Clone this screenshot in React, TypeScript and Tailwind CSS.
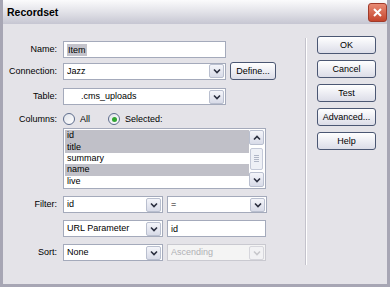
import React from "react";

const font = { fontFamily: '"Liberation Sans", Arial, sans-serif' };

const Arrow: React.FC<{ disabled?: boolean }> = ({ disabled }) => (
    <div
        className={`flex h-[14px] w-[15px] shrink-0 items-center justify-center rounded-[2px] border ${
            disabled ? "border-[#d6d6dc] bg-[#f2f2f4]" : "border-[#b9bfcf] bg-gradient-to-b from-[#f4f5fa] to-[#d8dbe8]"
        }`}
    >
        <svg width="8" height="6" viewBox="0 0 8 6">
            <path
                d="M1 1.5 L4 4.5 L7 1.5"
                fill="none"
                stroke={disabled ? "#c8c8cc" : "#2b2f3f"}
                strokeWidth="1.6"
            />
        </svg>
    </div>
);

const Select: React.FC<{ value: string; width: string; disabled?: boolean; indent?: boolean }> = ({
    value,
    width,
    disabled,
    indent,
}) => (
    <div
        className={`flex h-[17px] items-center border pl-[3px] pr-[1px] ${width} ${
            disabled ? "border-[#c9c9d0] bg-[#f4f4f4] text-[#b0b0b4]" : "border-[#a4aabb] bg-white text-black"
        }`}
    >
        <span className={`flex-1 truncate leading-[13px] ${indent ? "pl-[14px]" : ""}`}>{value}</span>
        <Arrow disabled={disabled} />
    </div>
);

const Input: React.FC<{ value: string; width: string; highlight?: boolean }> = ({ value, width, highlight }) => (
    <div className={`flex h-[17px] items-center border border-[#a4aabb] bg-white pl-[3px] ${width}`}>
        <span className={`leading-[12px] ${highlight ? "bg-[#c3c3cb] px-[1px]" : ""}`}>{value}</span>
    </div>
);

const Button: React.FC<{ label: string; className?: string }> = ({ label, className }) => (
    <div
        className={`flex h-[18px] items-center justify-center rounded-[3px] border border-[#4b5773] bg-gradient-to-b from-white to-[#dcdde8] text-black ${
            className ?? "w-[59px]"
        }`}
    >
        {label}
    </div>
);

const Row: React.FC<{ label: string; className?: string; children: React.ReactNode }> = ({
    label,
    className,
    children,
}) => (
    <div className={`flex items-center ${className ?? ""}`}>
        <div className="w-[60px] shrink-0 pr-[6px] text-right">{label}</div>
        <div className="flex items-center gap-[4px]">{children}</div>
    </div>
);

const Radio: React.FC<{ checked?: boolean }> = ({ checked }) => (
    <div className="flex h-[12px] w-[12px] items-center justify-center rounded-full border border-[#5d6c8c] bg-gradient-to-br from-[#e0e3ea] to-white">
        {checked && <div className="h-[5px] w-[5px] rounded-full bg-[#31a531]" />}
    </div>
);

const columns = [
    { name: "id", sel: true },
    { name: "title", sel: true },
    { name: "summary", sel: false },
    { name: "name", sel: true },
    { name: "live", sel: false },
];

export default function App() {
    return (
        <div
            style={font}
            className="flex h-[287px] w-[390px] flex-col overflow-hidden border-[3px] border-t-0 border-[#a7a6b4] bg-[#e4e3e8] text-[9px] leading-none text-black"
        >
            {/* title bar */}
            <div className="-mx-[3px] flex h-[24px] shrink-0 items-center justify-between bg-gradient-to-b from-[#fbfbfc] via-[#e2e2e8] to-[#c6c6d2] pl-[7px] pr-[3px]">
                <span className="text-[10.5px] font-bold">Recordset</span>
                <div className="flex h-[19px] w-[19px] items-center justify-center rounded-[3px] border border-[#a03a2a] bg-gradient-to-b from-[#e88a74] to-[#c4442c]">
                    <svg width="11" height="11" viewBox="0 0 11 11">
                        <path d="M2 2 L9 9 M9 2 L2 9" stroke="white" strokeWidth="2" />
                    </svg>
                </div>
            </div>

            <div className="flex flex-1">
                {/* form area */}
                <div className="flex w-[302px] flex-col pt-[17px]">
                    <Row label="Name:">
                        <Input value="Item" width="w-[163px]" highlight />
                    </Row>
                    <Row label="Connection:" className="mt-[4px]">
                        <Select value="Jazz" width="w-[163px]" />
                        <Button label="Define..." className="w-[46px]" />
                    </Row>
                    <Row label="Table:" className="mt-[8px]">
                        <Select value=".cms_uploads" width="w-[163px]" indent />
                    </Row>
                    <Row label="Columns:" className="mt-[7px] h-[14px]">
                        <Radio />
                        <span className="ml-[1px] mr-[14px]">All</span>
                        <Radio checked />
                        <span className="ml-[1px]">Selected:</span>
                    </Row>
                    <div className="ml-[60px] mt-[2px] flex h-[61px] w-[203px] border border-[#a4aabb] bg-white p-[1px]">
                        <div className="flex flex-1 flex-col">
                            {columns.map((c) => (
                                <div
                                    key={c.name}
                                    className={`flex h-[11.6px] items-center pl-[2px] ${c.sel ? "bg-[#c0c0c8]" : ""}`}
                                >
                                    {c.name}
                                </div>
                            ))}
                        </div>
                        <div className="flex w-[15px] flex-col items-center justify-between">
                            <div className="flex h-[15px] w-[15px] items-center justify-center rounded-[2px] border border-[#b9bfcf] bg-gradient-to-b from-[#f4f5fa] to-[#d8dbe8]">
                                <svg width="8" height="6" viewBox="0 0 8 6">
                                    <path d="M1 4.5 L4 1.5 L7 4.5" fill="none" stroke="#2b2f3f" strokeWidth="1.6" />
                                </svg>
                            </div>
                            <div className="flex h-[22px] w-[13px] flex-col items-center justify-center gap-[1px] rounded-[2px] border border-[#c4c9d8] bg-[#eef0f6]">
                                <div className="h-px w-[5px] bg-[#b0b6c6]" />
                                <div className="h-px w-[5px] bg-[#b0b6c6]" />
                                <div className="h-px w-[5px] bg-[#b0b6c6]" />
                                <div className="h-px w-[5px] bg-[#b0b6c6]" />
                            </div>
                            <div className="flex h-[15px] w-[15px] items-center justify-center rounded-[2px] border border-[#b9bfcf] bg-gradient-to-b from-[#f4f5fa] to-[#d8dbe8]">
                                <svg width="8" height="6" viewBox="0 0 8 6">
                                    <path d="M1 1.5 L4 4.5 L7 1.5" fill="none" stroke="#2b2f3f" strokeWidth="1.6" />
                                </svg>
                            </div>
                        </div>
                    </div>
                    <Row label="Filter:" className="mt-[7px]">
                        <Select value="id" width="w-[100px]" />
                        <Select value="=" width="w-[100px]" />
                    </Row>
                    <div className="ml-[60px] mt-[7px] flex gap-[4px]">
                        <Select value="URL Parameter" width="w-[100px]" />
                        <Input value="id" width="w-[99px]" />
                    </div>
                    <Row label="Sort:" className="mt-[7px]">
                        <Select value="None" width="w-[100px]" />
                        <Select value="Ascending" width="w-[99px]" disabled />
                    </Row>
                </div>

                {/* separator */}
                <div className="mb-[19px] mt-[14px] w-[2px] border-l border-r border-l-[#c4c3cc] border-r-white" />

                {/* buttons */}
                <div className="flex flex-1 flex-col items-start gap-[6px] pl-[10px] pt-[12px]">
                    <Button label="OK" />
                    <Button label="Cancel" />
                    <Button label="Test" />
                    <Button label="Advanced..." />
                    <Button label="Help" />
                </div>
            </div>
        </div>
    );
}
